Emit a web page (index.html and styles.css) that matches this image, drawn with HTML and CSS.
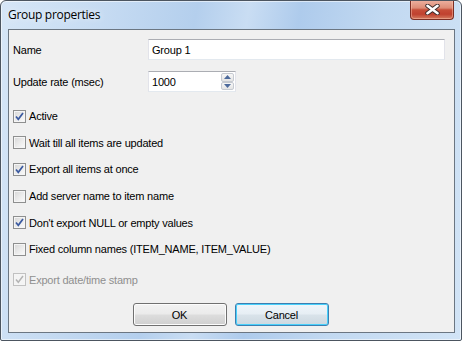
FILE: index.html
```html
<!DOCTYPE html>
<html>
<head>
<meta charset="utf-8">
<link rel="stylesheet" href="styles.css">
</head>
<body>
<div class="window">
  <div class="titlebar">
    <span class="title">Group properties</span>
    <div class="close">
      <svg width="15" height="11" viewBox="0 0 15 11">
        <path d="M2.5 1.8 L12.5 9.2 M12.5 1.8 L2.5 9.2" stroke="#3a2a2a" stroke-width="4.4" stroke-linecap="round" fill="none"/>
        <path d="M2.5 1.8 L12.5 9.2 M12.5 1.8 L2.5 9.2" stroke="#ffffff" stroke-width="2.6" stroke-linecap="round" fill="none"/>
      </svg>
    </div>
  </div>
  <div class="client">
    <div class="field name-row">
      <span class="flabel">Name</span>
      <div class="textbox wide">Group 1</div>
    </div>
    <div class="field rate-row">
      <span class="flabel">Update rate (msec)</span>
      <div class="textbox narrow">
        <span class="val">1000</span>
        <div class="spinner">
          <div class="sbtn"><svg width="7" height="4" viewBox="0 0 7 4"><path d="M0 4 L3.5 0 L7 4 Z" fill="#4d6a9c"/></svg></div>
          <div class="sbtn"><svg width="7" height="4" viewBox="0 0 7 4"><path d="M0 0 L7 0 L3.5 4 Z" fill="#4d6a9c"/></svg></div>
        </div>
      </div>
    </div>
    <div class="checks">
      <div class="check"><span class="cb on"><svg width="9" height="9" viewBox="0 0 9 9"><path d="M1 4.5 L3.3 7.3 L8 1" stroke="#3b5aa0" stroke-width="1.7" fill="none"/></svg></span><span>Active</span></div>
      <div class="check"><span class="cb"></span><span>Wait till all items are updated</span></div>
      <div class="check"><span class="cb on"><svg width="9" height="9" viewBox="0 0 9 9"><path d="M1 4.5 L3.3 7.3 L8 1" stroke="#3b5aa0" stroke-width="1.7" fill="none"/></svg></span><span>Export all items at once</span></div>
      <div class="check"><span class="cb"></span><span>Add server name to item name</span></div>
      <div class="check"><span class="cb on"><svg width="9" height="9" viewBox="0 0 9 9"><path d="M1 4.5 L3.3 7.3 L8 1" stroke="#3b5aa0" stroke-width="1.7" fill="none"/></svg></span><span>Don't export NULL or empty values</span></div>
      <div class="check"><span class="cb"></span><span>Fixed column names (ITEM_NAME, ITEM_VALUE)</span></div>
      <div class="check disabled"><span class="cb on"><svg width="9" height="9" viewBox="0 0 9 9"><path d="M1 4.5 L3.3 7.3 L8 1" stroke="#b4b4b4" stroke-width="1.5" fill="none"/></svg></span><span>Export date/time stamp</span></div>
    </div>
    <div class="buttons">
      <div class="btn">OK</div>
      <div class="btn default">Cancel</div>
    </div>
  </div>
</div>
</body>
</html>
```

FILE: styles.css
```css
html, body {
  margin: 0;
  padding: 0;
  background: #ffffff;
}

.window {
  width: 462px;
  height: 341px;
  box-sizing: border-box;
  border: 1px solid #4c5560;
  border-radius: 6px 6px 2px 2px;
  background: linear-gradient(100deg, #d6e6f7 0%, #c6dbf2 20%, #b4cfed 38%, #c9ddf3 48%, #aecbec 58%, #c2d9f1 74%, #d2e4f6 100%);
  box-shadow: inset 0 0 0 1px rgba(255, 255, 255, 0.55);
  display: flex;
  flex-direction: column;
  overflow: hidden;
}

.titlebar {
  height: 28px;
  display: flex;
  align-items: flex-start;
  padding-left: 7px;
}

.title {
  font-family: "Open Sans", "Noto Sans", sans-serif;
  font-size: 12px;
  letter-spacing: -0.3px;
  color: #000;
  margin-top: 5px;
  text-shadow: 0 0 6px rgba(255, 255, 255, 0.9);
}

.close {
  margin-left: auto;
  margin-right: 7px;
  margin-top: -1px;
  width: 44px;
  height: 20px;
  box-sizing: border-box;
  border: 1px solid #7b2e24;
  border-top: none;
  border-radius: 0 0 4px 4px;
  background: linear-gradient(180deg, #eeb3a2 0%, #dd8c76 42%, #c64d38 52%, #c0412f 75%, #d47c60 100%);
  box-shadow: inset 0 0 0 1px rgba(255, 200, 180, 0.45);
  display: flex;
  align-items: center;
  justify-content: center;
}

.client {
  flex: 1;
  margin: 0 6px 7px 7px;
  border: 1px solid #6b7682;
  background: #f0f0f0;
  padding: 0 9px 6px 4px;
  display: flex;
  flex-direction: column;
  font-family: "Liberation Sans", Arial, sans-serif;
  font-size: 11px;
  letter-spacing: -0.2px;
  color: #000;
}

.field {
  display: flex;
  align-items: center;
  height: 21px;
}

.name-row {
  margin-top: 9px;
}

.rate-row {
  margin-top: 11px;
}

.flabel {
  width: 135px;
  flex: none;
}

.textbox {
  height: 21px;
  box-sizing: border-box;
  background: #ffffff;
  border: 1px solid #e2e3ea;
  border-top-color: #abadb3;
  border-bottom-color: #e3e9ef;
  padding-left: 3px;
  display: flex;
  align-items: center;
}

.wide {
  flex: 1;
}

.narrow {
  width: 88px;
  padding-right: 1px;
}

.val {
  flex: 1;
}

.spinner {
  width: 13px;
  height: 17px;
  display: flex;
  flex-direction: column;
}

.sbtn {
  flex: 1;
  box-sizing: border-box;
  border: 1px solid #c6cad1;
  border-radius: 2px;
  background: linear-gradient(180deg, #f7f7f7, #e4e4e4);
  display: flex;
  align-items: center;
  justify-content: center;
}

.checks {
  margin-top: 11px;
  display: flex;
  flex-direction: column;
}

.check {
  height: 26.6px;
  display: flex;
  align-items: center;
  gap: 3px;
}

.check.disabled {
  margin-top: 4px;
  color: #8f8f8f;
}

.cb {
  width: 13px;
  height: 13px;
  box-sizing: border-box;
  border: 1px solid #8e8f8f;
  background: linear-gradient(135deg, #d6d6d6 0%, #ececec 55%, #fbfbfb 100%);
  box-shadow: inset 0 0 0 1px #f5f5f5;
  display: flex;
  align-items: center;
  justify-content: center;
  flex: none;
}

.disabled .cb {
  border-color: #c1c1c1;
  background: #f4f4f4;
}

.buttons {
  margin-top: auto;
  display: flex;
  justify-content: center;
  gap: 8px;
  padding-left: 3px;
}

.btn {
  width: 94px;
  height: 23px;
  box-sizing: border-box;
  border: 1px solid #707070;
  border-radius: 3px;
  background: linear-gradient(180deg, #f2f2f2 0%, #ebebeb 48%, #dddddd 52%, #cfcfcf 100%);
  box-shadow: inset 0 0 0 1px #fcfcfc;
  display: flex;
  align-items: center;
  justify-content: center;
}

.btn.default {
  border-color: #3c7fb1;
  background: linear-gradient(180deg, #f0f6fa 0%, #e6eef4 48%, #d9e3ea 52%, #ccd8e0 100%);
  box-shadow: inset 0 0 0 1px #48d0fb;
}
```
